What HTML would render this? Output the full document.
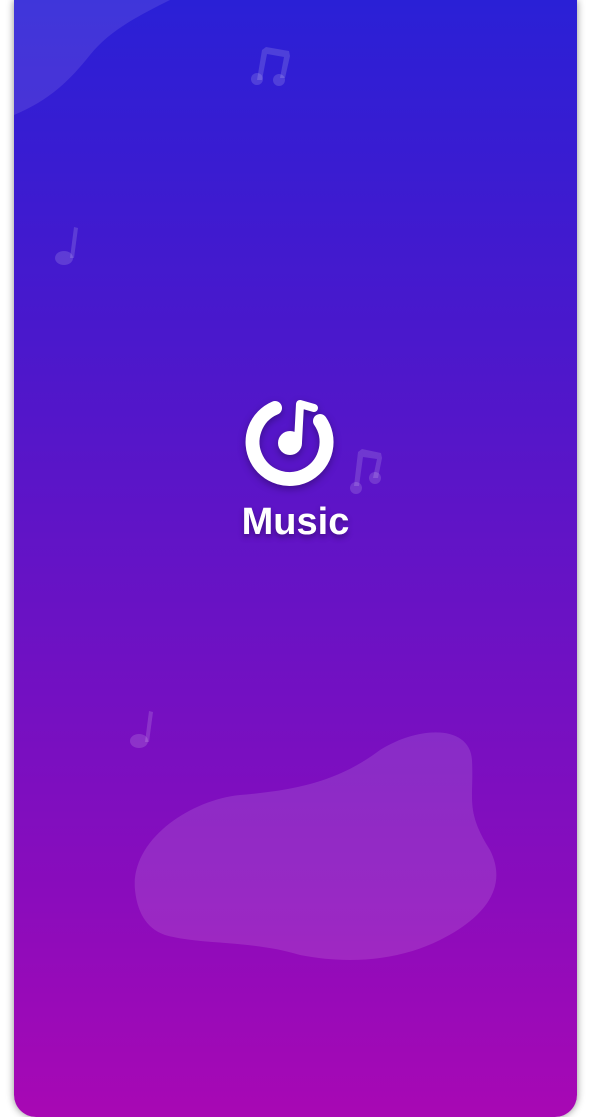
<!DOCTYPE html>
<html><head><style>
html,body{margin:0;padding:0;width:591px;height:1117px;background:#fff;overflow:hidden}
.card{position:absolute;left:14px;top:0;width:563px;height:1117px;border-radius:0 0 22px 22px;overflow:hidden;
background:linear-gradient(180deg,#2a20d6 0%,#4a18cc 30%,#6a12c4 55%,#8a0cbc 80%,#a808b4 100%);
box-shadow:0 0 8px rgba(0,0,0,.45)}
svg{position:absolute;left:0;top:0}
.t{position:absolute;left:0;width:563px;top:501px;text-align:center;color:#fff;font:bold 38px "Liberation Sans",sans-serif;text-shadow:0 3px 6px rgba(0,0,0,.35)}
</style></head><body>
<div class="card">
<svg width="563" height="1117" viewBox="14 0 563 1117">
<path d="M14 115 C50 100 70 80 90 55 C110 30 140 15 170 0 L14 0Z" fill="rgba(255,255,255,.1)"/>
<path d="M135 890 C130 840 190 800 240 795 C300 790 340 780 380 750 C420 725 470 725 472 760 C474 800 465 810 490 850 C510 890 480 920 440 940 C400 960 350 965 300 955 C250 940 200 945 165 935 C145 928 137 910 135 890Z" fill="rgba(255,255,255,.12)"/>
<g fill="rgba(255,255,255,.15)">
<path d="M262 50 L266 47 L289 51 L290 56 L285 78 L280 78 L284 57 L267 54 L262 80 L257 80Z"/>
<circle cx="257" cy="79" r="6"/><circle cx="279" cy="80" r="6"/>
<path d="M74 227 L78 228 L74 258 L70 258Z"/>
<ellipse cx="64" cy="258" rx="9" ry="7"/>
<path d="M149 711 L153 712 L149 742 L145 742Z"/>
<ellipse cx="139" cy="741" rx="9" ry="7"/>
<path d="M358 452 L362 449 L381 453 L382 458 L378 478 L373 478 L377 459 L363 457 L359 486 L354 486Z"/>
<circle cx="356" cy="488" r="6"/><circle cx="375" cy="478" r="6"/>
</g>
<g filter="drop-shadow(0 3px 4px rgba(0,0,0,.3))">
<path d="M275 408 A37 37 0 1 0 320 421" fill="none" stroke="#fff" stroke-width="14" stroke-linecap="round"/>
<circle cx="290" cy="443" r="12" fill="#fff"/>
<path d="M298 442 L300 404 L314 408" fill="none" stroke="#fff" stroke-width="8" stroke-linecap="round" stroke-linejoin="round"/>
</g>
</svg>
<div class="t">Music</div>
</div>
</body></html>
